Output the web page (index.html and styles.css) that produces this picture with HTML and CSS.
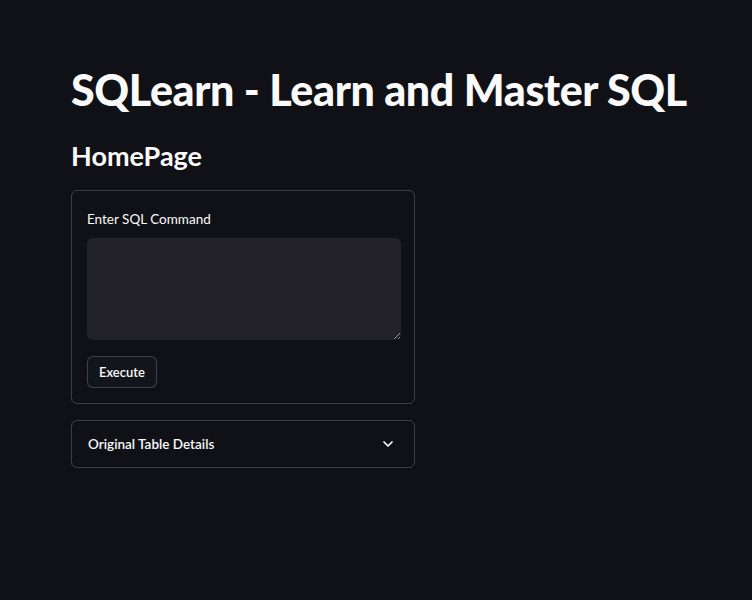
FILE: index.html
```html
<!DOCTYPE html>
<html>
<head>
<meta charset="utf-8">
<link rel="stylesheet" href="styles.css">
</head>
<body>
<main class="main">
  <h1 class="title">SQLearn - Learn and Master SQL</h1>
  <h3 class="subtitle">HomePage</h3>
  <form class="form">
    <label class="label" for="sql">Enter SQL Command</label>
    <textarea id="sql" class="textarea"></textarea>
    <button type="button" class="btn">Execute</button>
  </form>
  <div class="expander">
    <span class="exp-title">Original Table Details</span>
    <svg class="chevron" width="16" height="16" viewBox="0 0 24 24"><path d="M6 9l6 6 6-6" fill="none" stroke="#fafafa" stroke-width="2.6" stroke-linecap="round" stroke-linejoin="round"/></svg>
  </div>
</main>
</body>
</html>
```
FILE: styles.css
```css
html, body {
  margin: 0;
  padding: 0;
  background: #0f1116;
  color: #fafafa;
  font-family: Lato, "Noto Sans", sans-serif;
}
.main {
  padding: 62px 0 0 71px;
  display: flex;
  flex-direction: column;
  align-items: flex-start;
}
.title {
  margin: 0;
  font-size: 43px;
  font-weight: 900;
  line-height: 56px;
  letter-spacing: -0.4px;
}
.subtitle {
  margin: 20px 0 0 0;
  font-size: 27px;
  font-weight: 700;
  line-height: 36px;
}
.form {
  margin-top: 16px;
  width: 344px;
  box-sizing: border-box;
  border: 1px solid rgba(250,250,250,0.2);
  border-radius: 6px;
  padding: 19px 14px 15px 15px;
  display: flex;
  flex-direction: column;
  align-items: flex-start;
}
.label {
  font-size: 13.5px;
  line-height: 18px;
  margin-bottom: 10px;
}
.textarea {
  width: 314px;
  height: 102px;
  box-sizing: border-box;
  background: #23222a;
  border: none;
  border-radius: 6px;
  color: #fafafa;
  margin: 0;
  display: block;
}
.btn {
  margin-top: 16px;
  height: 32px;
  padding: 0 11px;
  background: #12151b;
  color: #fafafa;
  border: 1px solid rgba(250,250,250,0.2);
  border-radius: 6px;
  font-family: Lato, "Noto Sans", sans-serif;
  font-size: 13px;
  font-weight: 600;
}
.expander {
  margin-top: 16px;
  width: 344px;
  height: 48px;
  box-sizing: border-box;
  border: 1px solid rgba(250,250,250,0.2);
  border-radius: 6px;
  display: flex;
  align-items: center;
  justify-content: space-between;
  padding: 0 18px 0 16px;
}
.exp-title {
  font-size: 13.5px;
  font-weight: 600;
}
.chevron { display: block; }
```
